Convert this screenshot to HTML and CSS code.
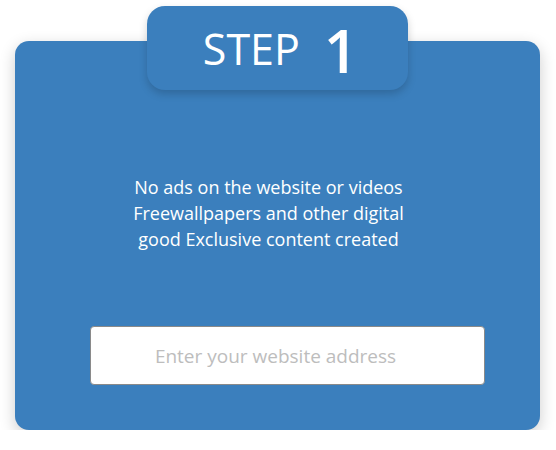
FILE: index.html
```html
<!DOCTYPE html>
<html lang="en">
<head>
  <meta charset="UTF-8" />
  <title>Step 1</title>
  <link rel="stylesheet" href="styles.css">
</head>
<body>
  <div class="step-card">
    <div class="step-tab">
      <span class="step-label">STEP</span>
      <span class="step-num">1</span>
    </div>

    <p class="step-text">
      No ads on the website or videos<br>
      Freewallpapers and other digital<br>
      good Exclusive content created
    </p>

    <input type="text" class="step-input" placeholder="Enter your website address">
  </div>
</body>
</html>
```

FILE: styles.css
```css
body {
  margin: 0;
  font-family: "Open Sans", Arial, sans-serif;
  background: #fff;
}

.step-card {
  box-sizing: border-box;
  width: 525px;
  height: 389px;
  margin: 41px 0 0 15px;
  background: #3b7fbd;
  border-radius: 14px;
  box-shadow: 0 5px 16px rgba(0,0,0,0.2);
  display: flex;
  flex-direction: column;
  align-items: center;
  color: #fff;
}

.step-tab {
  box-sizing: border-box;
  width: 261px;
  height: 84px;
  margin-top: -35px;
  background: #3b7fbd;
  border-radius: 18px;
  box-shadow: 0 4px 8px rgba(0,0,0,0.18);
  display: flex;
  justify-content: center;
  align-items: center;
  gap: 24px;
}

.step-label {
  font-size: 43px;
  line-height: 1;
  margin-left: 6px;
}

.step-num {
  font-size: 60px;
  font-weight: 600;
  line-height: 1;
  margin-top: 4px;
}

.step-text {
  margin: 84px 0 0;
  padding-right: 18px;
  text-align: center;
  font-size: 18px;
  line-height: 26px;
}

.step-input {
  box-sizing: border-box;
  width: 395px;
  height: 59px;
  margin: 74px 0 0 20px;
  border: 1px solid #8a8a8a;
  border-radius: 4px;
  background: #fff;
  font-family: inherit;
  font-size: 19px;
  text-align: center;
  padding-right: 26px;
  outline: none;
}

.step-input::placeholder {
  color: #bdbdbd;
}
```
